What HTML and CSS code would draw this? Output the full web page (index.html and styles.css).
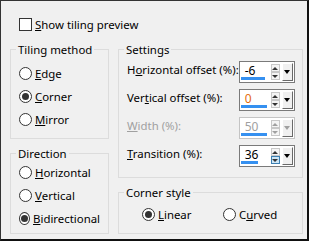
FILE: index.html
```
<!DOCTYPE html>
<html lang="en">
<head>
  <meta charset="UTF-8" />
  <title>Tiling</title>
  <link rel="stylesheet" href="styles.css">
</head>
<body>
  <div class="dialog">
    <label class="check-row"><span class="checkbox"></span><u>S</u>how tiling preview</label>

    <div class="columns">
      <div class="col">
        <fieldset class="group tiling">
          <legend>Tiling method</legend>
          <label class="radio"><span class="dot"></span><u>E</u>dge</label>
          <label class="radio"><span class="dot on"></span><u>C</u>orner</label>
          <label class="radio"><span class="dot"></span><u>M</u>irror</label>
        </fieldset>

        <fieldset class="group direction">
          <legend>Direction</legend>
          <label class="radio"><span class="dot"></span><u>H</u>orizontal</label>
          <label class="radio"><span class="dot"></span><u>V</u>ertical</label>
          <label class="radio"><span class="dot on"></span><u>B</u>idirectional</label>
        </fieldset>
      </div>

      <div class="col">
        <fieldset class="group settings">
          <legend>Settings</legend>
          <div class="fields">
            <div class="field-row">
              <span class="field-label">H<u>o</u>rizontal offset (%):</span>
              <div class="spin">
                <div class="spin-value">-6<span class="spin-bar" style="width:24px"></span></div>
                <span class="updown"><span class="up"></span><span class="down"></span></span>
                <span class="drop"></span>
              </div>
            </div>
            <div class="field-row">
              <span class="field-label">Ver<u>t</u>ical offset (%):</span>
              <div class="spin">
                <div class="spin-value orange">0<span class="spin-bar" style="width:26px"></span></div>
                <span class="updown"><span class="up"></span><span class="down"></span></span>
                <span class="drop"></span>
              </div>
            </div>
            <div class="field-row disabled">
              <span class="field-label"><u>W</u>idth (%):</span>
              <div class="spin">
                <div class="spin-value">50<span class="spin-bar" style="width:26px"></span></div>
                <span class="updown"><span class="up"></span><span class="down"></span></span>
                <span class="drop"></span>
              </div>
            </div>
            <div class="field-row">
              <span class="field-label"><u>T</u>ransition (%):</span>
              <div class="spin">
                <div class="spin-value">36<span class="spin-bar" style="width:17px"></span></div>
                <span class="updown"><span class="up"></span><span class="down hover"></span></span>
                <span class="drop"></span>
              </div>
            </div>
          </div>
        </fieldset>

        <fieldset class="group corner">
          <legend>Corner style</legend>
          <div class="radio-pair">
            <label class="radio"><span class="dot on"></span><u>L</u>inear</label>
            <label class="radio"><span class="dot"></span>C<u>u</u>rved</label>
          </div>
        </fieldset>
      </div>
    </div>
  </div>
</body>
</html>
```
FILE: styles.css
```
body {
  margin: 0;
  background: #f0f0f0;
  font-family: "Segoe UI", "Noto Sans", sans-serif;
  font-size: 11.4px;
  color: #000;
}
u {
  text-underline-offset: 1px;
}
.dialog {
  width: 309px;
  height: 241px;
  box-sizing: border-box;
  border-top: 1px solid #333;
  border-left: 1px solid #333;
  border-right: 2px solid #111;
  border-bottom: 2px solid #111;
  padding: 15px 4px 0 9px;
  overflow: hidden;
}
.check-row {
  display: flex;
  align-items: center;
  height: 16px;
  margin-left: 9px;
}
.checkbox {
  width: 13px;
  height: 13px;
  box-sizing: border-box;
  border: 1px solid #333;
  background: #fff;
  margin-right: 3px;
}
.columns {
  display: flex;
  gap: 9px;
  margin-top: 10px;
}
.col:first-child {
  width: 99px;
}
.col:last-child {
  width: 185px;
}
.group {
  margin: 0;
  min-width: 0;
  border: 1px solid #dcdcdc;
  padding: 0 8px;
}
.group legend {
  line-height: 15px;
  padding: 0 2px;
  margin-left: -3px;
}
.tiling {
  padding-top: 5px;
  padding-bottom: 7px;
}
.direction {
  margin-top: 7px;
  padding-bottom: 3px;
}
.settings {
  padding: 4px 9px 10px 8px;
}
.corner {
  margin-top: 7px;
  padding-top: 3px;
  padding-bottom: 7px;
}
.radio {
  display: flex;
  align-items: center;
  height: 23px;
  white-space: nowrap;
}
.dot {
  width: 13px;
  height: 13px;
  box-sizing: border-box;
  border: 1px solid #333;
  border-radius: 50%;
  background: #fff;
  margin-right: 3px;
  display: flex;
  align-items: center;
  justify-content: center;
}
.dot.on::after {
  content: "";
  width: 7px;
  height: 7px;
  border-radius: 50%;
  background: #333;
}
.radio-pair {
  display: grid;
  grid-template-columns: 81px auto;
  padding-left: 15px;
}
.fields {
  display: grid;
  gap: 6px;
}
.field-row {
  display: flex;
  justify-content: space-between;
  align-items: flex-start;
  height: 22px;
}
.field-label {
  line-height: 15px;
  margin-top: 1px;
  white-space: nowrap;
}
.spin {
  width: 56px;
  height: 22px;
  box-sizing: border-box;
  border: 1px solid #7a7a7a;
  background: #fff;
  display: flex;
  align-items: center;
  padding: 0 1px 0 1px;
}
.spin-value {
  flex: 1;
  align-self: stretch;
  position: relative;
  padding-left: 4px;
  line-height: 17px;
  font-size: 12px;
}
.spin-value.orange {
  color: #e56a0c;
}
.spin-bar {
  position: absolute;
  left: 0;
  bottom: 2px;
  height: 3px;
  background: #3590f0;
}
.updown {
  display: flex;
  flex-direction: column;
  width: 9px;
  height: 16px;
  margin-right: 2px;
}
.updown span {
  flex: 1;
  box-sizing: border-box;
  border: 1px solid #c8c8c8;
  background: #f4f4f4;
  display: flex;
  align-items: center;
  justify-content: center;
}
.updown .up::after {
  content: "";
  border-left: 3px solid transparent;
  border-right: 3px solid transparent;
  border-bottom: 3px solid #333;
}
.updown .down::after {
  content: "";
  border-left: 3px solid transparent;
  border-right: 3px solid transparent;
  border-top: 3px solid #333;
}
.updown .down.hover {
  background: #cde6f7;
  border-color: #3c7fb1;
}
.drop {
  width: 11px;
  height: 18px;
  box-sizing: border-box;
  background: #f0f0f0;
  border-top: 1px solid #fff;
  border-left: 1px solid #fff;
  border-right: 1px solid #696969;
  border-bottom: 1px solid #696969;
  display: flex;
  align-items: center;
  justify-content: center;
}
.drop::after {
  content: "";
  border-left: 3px solid transparent;
  border-right: 3px solid transparent;
  border-top: 4px solid #000;
}
.disabled .field-label,
.disabled .spin-value {
  color: #a0a0a0;
}
.disabled .spin {
  border-color: #c4c4c4;
}
.disabled .updown span::after {
  border-top-color: #a0a0a0;
  border-bottom-color: #a0a0a0;
}
.disabled .drop::after {
  border-top-color: #a0a0a0;
}
```
